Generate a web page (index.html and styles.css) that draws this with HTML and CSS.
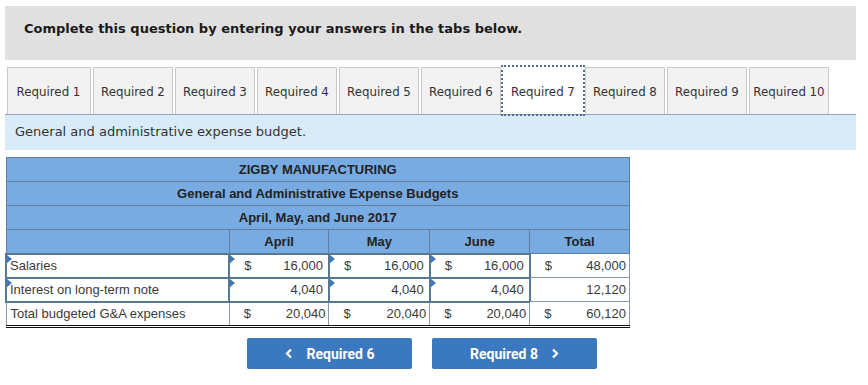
FILE: index.html
```html
<!DOCTYPE html>
<html>
<head>
<meta charset="utf-8">
<link rel="stylesheet" href="styles.css">
</head>
<body>
<div class="page">
  <div class="banner">Complete this question by entering your answers in the tabs below.</div>
  <div class="tabs">
    <div class="tab first">Required 1</div>
    <div class="tab">Required 2</div>
    <div class="tab">Required 3</div>
    <div class="tab">Required 4</div>
    <div class="tab">Required 5</div>
    <div class="tab">Required 6</div>
    <div class="tab active">Required 7</div>
    <div class="tab">Required 8</div>
    <div class="tab">Required 9</div>
    <div class="tab">Required 10</div>
  </div>
  <div class="prompt">General and administrative expense budget.</div>
  <table class="budget">
    <colgroup>
      <col class="c-label"><col class="c-num"><col class="c-num2"><col class="c-num"><col class="c-num">
    </colgroup>
    <tr class="hd"><td colspan="5">ZIGBY MANUFACTURING</td></tr>
    <tr class="hd"><td colspan="5">General and Administrative Expense Budgets</td></tr>
    <tr class="hd"><td colspan="5">April, May, and June 2017</td></tr>
    <tr class="hd cols"><td></td><td>April</td><td>May</td><td>June</td><td>Total</td></tr>
    <tr class="row">
      <td class="inp lbl"><span class="flag"></span>Salaries</td>
      <td class="inp"><span class="flag"></span><span class="money"><span>$</span><span>16,000</span></span></td>
      <td class="inp"><span class="flag"></span><span class="money"><span>$</span><span>16,000</span></span></td>
      <td class="inp"><span class="flag"></span><span class="money"><span>$</span><span>16,000</span></span></td>
      <td class="plain"><span class="money"><span>$</span><span>48,000</span></span></td>
    </tr>
    <tr class="row">
      <td class="inp lbl"><span class="flag"></span>Interest on long-term note</td>
      <td class="inp"><span class="flag"></span><span class="money"><span></span><span>4,040</span></span></td>
      <td class="inp"><span class="flag"></span><span class="money"><span></span><span>4,040</span></span></td>
      <td class="inp"><span class="flag"></span><span class="money"><span></span><span>4,040</span></span></td>
      <td class="plain"><span class="money"><span></span><span>12,120</span></span></td>
    </tr>
    <tr class="row total">
      <td class="plain lbl">Total budgeted G&amp;A expenses</td>
      <td class="plain"><span class="money"><span>$</span><span>20,040</span></span></td>
      <td class="plain"><span class="money"><span>$</span><span>20,040</span></span></td>
      <td class="plain"><span class="money"><span>$</span><span>20,040</span></span></td>
      <td class="plain"><span class="money"><span>$</span><span>60,120</span></span></td>
    </tr>
  </table>
  <div class="nav">
    <button class="navbtn"><svg class="chev" width="8" height="11" viewBox="0 0 8 11"><polyline points="6,1.5 2,5.5 6,9.5" fill="none" stroke="#fff" stroke-width="2.2"/></svg>Required 6</button>
    <button class="navbtn">Required 8<svg class="chev r" width="8" height="11" viewBox="0 0 8 11"><polyline points="2,1.5 6,5.5 2,9.5" fill="none" stroke="#fff" stroke-width="2.2"/></svg></button>
  </div>
</div>
</body>
</html>
```
FILE: styles.css
```css
* { box-sizing: border-box; }
html, body { margin: 0; padding: 0; background: #fff; }
.page { padding: 6px 12px 0 5px; width: 868px; font-family: Verdana, "DejaVu Sans", sans-serif; }
.banner {
  height: 54px; background: #e0e0e0; padding: 15px 0 0 19px;
  font-weight: bold; font-size: 13px; color: #1a1a1a; width: 851px;
}
.tabs { display: flex; gap: 2px; margin-top: 7px; padding-left: 2px; height: 47px; align-items: flex-start; }
.tab {
  width: 80px; height: 47px; border: 1px solid #c8c8c8; border-bottom: none; background: #f2f2f2;
  padding: 1px 0 0; display: flex; align-items: center; justify-content: center;
  font-size: 11.8px; color: #333; white-space: nowrap; flex-shrink: 0;
}
.tab.first { width: 84px; padding-right: 1px; }
.tab.active {
  background: #fff; border-color: #fff; outline: 2px dotted #4f6f93; outline-offset: 0;
  position: relative; z-index: 1;
}
.prompt {
  width: 851px; height: 36px; background: #d9ebf9; border-top: 1px solid #93a3b3;
  padding: 9px 0 0 10px; font-size: 13px; color: #333;
}
.budget {
  margin-top: 7px; border-collapse: collapse; width: 625px;
  font-family: Arial, "Liberation Sans", sans-serif; font-size: 13px; color: #333;
}
.c-label { width: 224px; } .c-num { width: 100px; } .c-num2 { width: 101px; }
.budget td { padding: 0; height: 24px; }
.hd td {
  background: #78abe2; border: 1px solid #5e7fa3; text-align: center;
  font-weight: bold; color: #222; height: 24px;
}
.row td { position: relative; background: #fff; vertical-align: middle; color: #3a3a3a; }
.row td.inp { border: 2px solid #557899; }
.row td.plain { border: 1px solid #8a98a6; }
.row td.lbl { padding-left: 3px; }
.row td.plain.lbl { padding-left: 4px; }
.flag {
  position: absolute; left: 0; top: 0; width: 0; height: 0;
  border-top: 4px solid transparent; border-bottom: 4px solid transparent;
  border-left: 5px solid #3d76b8;
}
.money { display: flex; justify-content: space-between; padding: 0 5px 0 14px; }
.plain .money { padding-right: 3px; }
.total td { border-top: 1px solid #111 !important; border-bottom: 3px double #111 !important; height: 25px; }
.nav { display: flex; gap: 20px; margin: 10px 0 0 242px; }
.navbtn {
  width: 165px; height: 31px; background: #3a78bf; border: none; border-radius: 2px; color: #fff;
  font-family: Roboto, "Liberation Sans", sans-serif; font-weight: bold; font-size: 14px;
  display: flex; align-items: center; justify-content: center; padding: 0;
}
.chev { margin-right: 14px; }
.chev.r { margin-right: 0; margin-left: 13px; }
```
